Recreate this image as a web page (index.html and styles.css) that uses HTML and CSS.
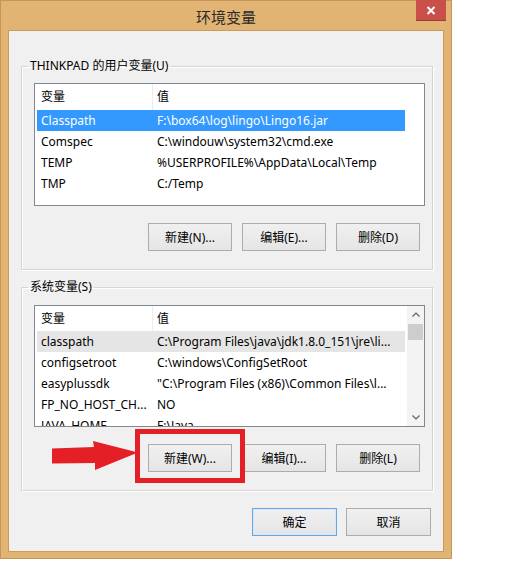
FILE: index.html
```html
<!DOCTYPE html>
<html lang="zh-CN">
<head>
<meta charset="utf-8">
<title>环境变量</title>
<link rel="stylesheet" href="styles.css">
</head>
<body>
<div class="window">
  <div class="titlebar">
    <span class="title">环境变量</span>
  </div>
  <button class="close" aria-label="关闭">
    <svg width="10" height="9" viewBox="0 0 10 9"><path d="M1.5 1 L8.5 8 M8.5 1 L1.5 8" stroke="#fff" stroke-width="2" fill="none"/></svg>
  </button>
  <div class="client">
    <fieldset class="group">
      <legend>THINKPAD 的用户变量(U)</legend>
      <div class="list list-user">
        <div class="list-main">
          <div class="row head"><span class="c1">变量</span><span class="c2">值</span></div>
          <div class="row selected"><span class="c1">Classpath</span><span class="c2">F:\box64\log\lingo\Lingo16.jar</span></div>
          <div class="row"><span class="c1">Comspec</span><span class="c2">C:\windouw\system32\cmd.exe</span></div>
          <div class="row"><span class="c1">TEMP</span><span class="c2">%USERPROFILE%\AppData\Local\Temp</span></div>
          <div class="row"><span class="c1">TMP</span><span class="c2">C:/Temp</span></div>
        </div>
      </div>
      <div class="buttons">
        <button class="btn">新建(N)...</button>
        <button class="btn">编辑(E)...</button>
        <button class="btn">删除(D)</button>
      </div>
    </fieldset>
    <fieldset class="group">
      <legend>系统变量(S)</legend>
      <div class="list list-system">
        <div class="list-main">
          <div class="row head"><span class="c1">变量</span><span class="c2">值</span></div>
          <div class="row inactive"><span class="c1">classpath</span><span class="c2">C:\Program Files\java\jdk1.8.0_151\jre\li...</span></div>
          <div class="row"><span class="c1">configsetroot</span><span class="c2">C:\windows\ConfigSetRoot</span></div>
          <div class="row"><span class="c1">easyplussdk</span><span class="c2">"C:\Program Files (x86)\Common Files\l...</span></div>
          <div class="row"><span class="c1">FP_NO_HOST_CH...</span><span class="c2">NO</span></div>
          <div class="row"><span class="c1">JAVA_HOME</span><span class="c2">F:\Java</span></div>
        </div>
        <div class="scrollbar">
          <div class="sb-btn"><svg width="8" height="5" viewBox="0 0 8 5"><path d="M0.5 4.5 L4 1 L7.5 4.5" stroke="#606060" stroke-width="1.2" fill="none"/></svg></div>
          <div class="sb-thumb"></div>
          <div class="sb-track"></div>
          <div class="sb-btn"><svg width="8" height="5" viewBox="0 0 8 5"><path d="M0.5 0.5 L4 4 L7.5 0.5" stroke="#606060" stroke-width="1.2" fill="none"/></svg></div>
        </div>
      </div>
      <div class="buttons">
        <button class="btn">新建(W)...</button>
        <button class="btn">编辑(I)...</button>
        <button class="btn">删除(L)</button>
      </div>
    </fieldset>
    <div class="dialog-buttons">
      <button class="btn btn-wide btn-default">确定</button>
      <button class="btn btn-wide">取消</button>
    </div>
  </div>
  <div class="annot-box"></div>
  <svg class="annot-arrow" width="88" height="31" viewBox="0 0 88 31">
    <polygon points="0,7.5 42,6 41,0 86,11.5 43,29 43,22 0,22.5" fill="#e51f26"/>
  </svg>
</div>
</body>
</html>
```
FILE: styles.css
```css
* { box-sizing: border-box; }

body {
  margin: 0;
  background: #fff;
  font-family: "Noto Sans", "Noto Sans CJK SC", sans-serif;
  font-size: 12px;
  color: #000;
}

.window {
  position: relative;
  width: 452px;
  height: 559px;
  background: #e2b473;
  border: 1px solid #c59659;
  padding: 0 7px 6px;
}

.titlebar {
  height: 29px;
  display: flex;
  align-items: center;
  justify-content: center;
}

.title {
  font-family: "Noto Sans CJK SC", sans-serif;
  font-size: 15px;
  color: #2a2a2a;
  margin-top: 1px;
}

.close {
  position: absolute;
  top: -1px;
  right: 5px;
  width: 30px;
  height: 21px;
  padding: 0;
  border: none;
  border-bottom: 1px solid #a83a34;
  background: #c9504a;
  display: flex;
  align-items: center;
  justify-content: center;
}

.client {
  height: 522px;
  background: #f0f0f0;
  border: 1px solid #c99c5e;
  padding: 27px 10px 0 12px;
}

.group {
  margin: 0;
  padding: 0;
  border: 1px solid #d5d5d5;
  box-shadow: 1px 1px 0 #fff, inset 1px 1px 0 #fff;
  min-inline-size: 0;
}

.group + .group { margin-top: 9px; }

legend {
  margin-left: 6px;
  padding: 0 2px;
  line-height: 16px;
}

.list {
  display: flex;
  margin: 9px 7px 0 12px;
  height: 123px;
  border: 1px solid #828790;
  background: #fff;
  overflow: hidden;
}

.list-system {
  margin-top: 10px;
  height: 122px;
}

.list-main {
  flex: 1;
  padding-left: 2px;
  overflow: hidden;
}

.row {
  display: flex;
  width: 368px;
  height: 21px;
  line-height: 21px;
  white-space: nowrap;
}

.row.head {
  height: 26px;
  line-height: 26px;
}

.list-system .row.head {
  height: 25px;
  line-height: 25px;
}

.row.head .c1 { border-right: 1px solid #ededed; }

.c1, .c2 {
  padding-left: 4px;
  overflow: hidden;
}

.c1 { width: 116px; flex: none; }
.c2 { width: 252px; flex: none; }

.row.selected {
  background: #3399ff;
  color: #fff;
}

.row.inactive {
  background: #e5e5e5;
}

.scrollbar {
  width: 17px;
  flex: none;
  background: #f3f3f3;
  display: flex;
  flex-direction: column;
}

.sb-btn {
  height: 17px;
  display: flex;
  align-items: center;
  justify-content: center;
}

.sb-thumb {
  height: 16px;
  margin: 1px 1px 0;
  background: #cdcdcd;
}

.sb-track { flex: 1; }

.buttons {
  display: flex;
  justify-content: flex-end;
  gap: 10px;
  margin: 17px 12px 18px 0;
}

.btn {
  width: 84px;
  height: 28px;
  padding: 0;
  border: 1px solid #acacac;
  background: linear-gradient(#f0f0f0, #e5e5e5);
  font-family: inherit;
  font-size: 12px;
  color: #000;
}

.dialog-buttons {
  display: flex;
  justify-content: flex-end;
  gap: 9px;
  margin: 17px 2px 0 0;
}

.btn-wide { width: 85px; }

.btn-default {
  border-color: #6aa6df;
  box-shadow: inset 0 0 0 1px #d6e8f8;
}

.annot-box {
  position: absolute;
  left: 134px;
  top: 428px;
  width: 110px;
  height: 54px;
  border: 5px solid #e51f26;
}

.annot-arrow {
  position: absolute;
  left: 51px;
  top: 440px;
}
```
